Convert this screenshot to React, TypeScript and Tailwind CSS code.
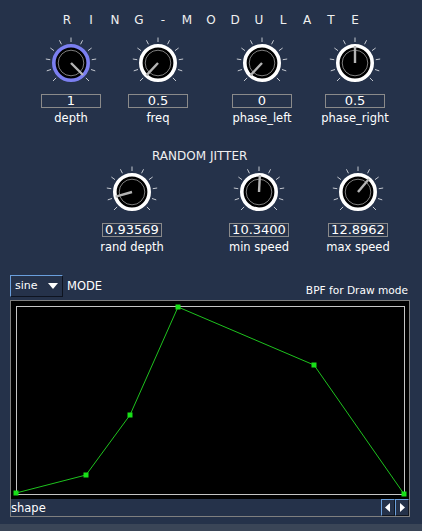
import type { FC } from "react";

const font = { fontFamily: '"DejaVu Sans", Verdana, sans-serif' };

type KnobProps = {
  angle: number;
  ring?: string;
  value: string;
  label: string;
  className?: string;
};

const ticks = Array.from({ length: 11 }, (_, i) => -135 + i * 27);

const pt = (a: number, r: number) => {
  const rad = (a * Math.PI) / 180;
  return [28 + r * Math.sin(rad), 28 - r * Math.cos(rad)];
};

const Knob: FC<KnobProps> = ({ angle, ring = "#ffffff", value, label, className }) => {
  const [px, py] = pt(angle, 17);
  return (
    <div className={`flex w-[64px] flex-col items-center ${className ?? ""}`}>
      <svg width="56" height="56" viewBox="0 0 56 56">
        {ticks.map((t) => {
          const [x1, y1] = pt(t, 21);
          const [x2, y2] = pt(t, 25.5);
          return <line key={t} x1={x1} y1={y1} x2={x2} y2={y2} stroke="#c4c8d0" strokeWidth="1" />;
        })}
        <circle cx="28" cy="28" r="17.2" fill="#000" stroke={ring} strokeWidth="3.6" />
        <circle cx="28" cy="28" r="12.8" fill="none" stroke="#7c7c7c" strokeWidth="1" />
        <line x1="28" y1="28" x2={px} y2={py} stroke="#b4b4b4" strokeWidth="2.4" />
      </svg>
      <div className="mt-[3px] flex h-[14px] w-[60px] items-center justify-center border border-[#8a8a8a] text-[13px] leading-[12px] text-white">
        {value}
      </div>
      <div className="mt-[3px] text-[11.5px] leading-[14px] text-white">{label}</div>
    </div>
  );
};

const title = "RING-MODULATE".split("");

const points: [number, number][] = [
  [5, 192],
  [75, 174],
  [119, 114],
  [167, 6],
  [303, 64],
  [393, 193],
];

const ArrowButton: FC<{ dir: "left" | "right"; className?: string }> = ({ dir, className }) => (
  <div
    className={`flex h-[17px] items-center justify-center border-t border-l border-r border-b border-t-[#6a9fdc] border-l-[#6a9fdc] border-r-[#10151f] border-b-[#10151f] ${className ?? ""}`}
  >
    <svg width="6" height="9" viewBox="0 0 6 9">
      {dir === "left" ? <polygon points="5,0 5,9 0,4.5" fill="#fff" /> : <polygon points="1,0 1,9 6,4.5" fill="#fff" />}
    </svg>
  </div>
);

export default function App() {
  return (
    <div className="flex h-[531px] w-[422px] flex-col bg-[#25324a] text-white" style={font}>
      <div className="flex justify-center pt-[13px]">
        {title.map((c, i) => (
          <span key={i} className="w-[24px] text-center text-[12px] leading-[15px] text-[#f0f0f0]">
            {c}
          </span>
        ))}
      </div>

      <div className="mt-[7px] flex pl-[39px]">
        <Knob angle={135} ring="#7b7ff0" value="1" label="depth" />
        <Knob angle={-137} value="0.5" label="freq" className="ml-[23px]" />
        <Knob angle={-137} value="0" label="phase_left" className="ml-[40px]" />
        <Knob angle={0} value="0.5" label="phase_right" className="ml-[29px]" />
      </div>

      <div className="mt-[24px] pl-[152px] text-[12px] leading-[14px] text-[#f0f0f0]">RANDOM JITTER</div>

      <div className="mt-[1px] flex pl-[100px]">
        <Knob angle={-106} value="0.93569" label="rand depth" />
        <Knob angle={3} value="10.3400" label="min speed" className="ml-[63px]" />
        <Knob angle={40} value="12.8962" label="max speed" className="ml-[35px]" />
      </div>

      <div className="mt-[21px] flex h-[22px] items-start pl-[10px]">
        <div className="flex h-[22px] w-[53px] items-center justify-between border-t border-l border-r border-b border-t-[#6a9fdc] border-l-[#6a9fdc] border-r-[#0e1420] border-b-[#0e1420] pr-[4px] pl-[4px]">
          <span className="text-[11px] leading-[14px]">sine</span>
          <svg width="10" height="6" viewBox="0 0 10 6">
            <polygon points="0,0 10,0 5,6" fill="#fff" />
          </svg>
        </div>
        <span className="mt-[4px] ml-[4px] text-[11.5px] leading-[14px]">MODE</span>
        <span className="mt-[8px] ml-auto mr-[14px] text-[10.6px] leading-[14px]">BPF for Draw mode</span>
      </div>

      <div className="mt-[3px] ml-[10px] flex h-[217px] w-[400px] flex-col border border-[#7f7f7f]">
        <svg width="398" height="198" viewBox="0 0 398 198" className="block bg-black">
          <rect x="5.5" y="5.5" width="388" height="188" fill="none" stroke="#c4c4c4" strokeWidth="1" />
          <polyline
            points={points.map((p) => p.join(",")).join(" ")}
            fill="none"
            stroke="#1ec21e"
            strokeWidth="1"
          />
          {points.map(([x, y], i) => (
            <rect key={i} x={x - 2.5} y={y - 2.5} width="5" height="5" fill="#18e018" />
          ))}
        </svg>
        <div className="flex h-[17px] items-center">
          <span className="pl-[0px] text-[11.5px] leading-[14px]">shape</span>
          <ArrowButton dir="left" className="ml-auto w-[14px]" />
          <ArrowButton dir="right" className="w-[14px]" />
        </div>
      </div>

      <div className="mt-[7px] h-[7px] bg-[#3a4557]" />
    </div>
  );
}
